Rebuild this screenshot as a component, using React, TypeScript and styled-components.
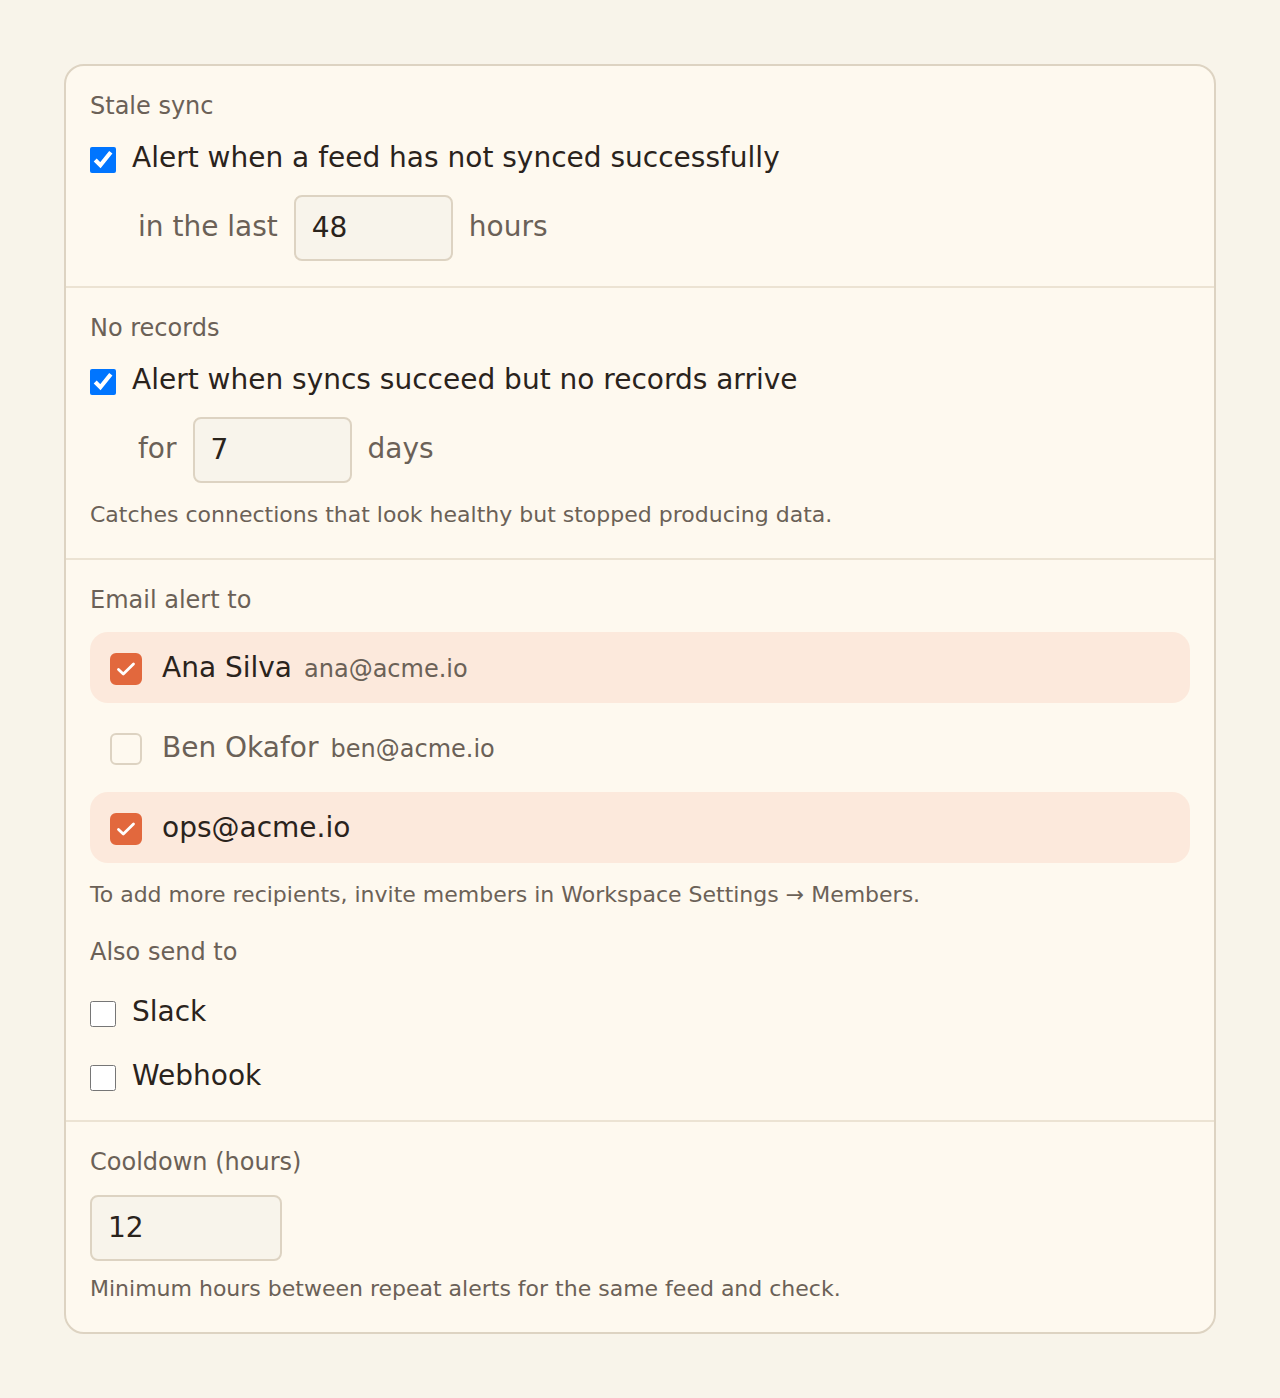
import * as React from 'react'
import styled, { createGlobalStyle, css } from 'styled-components'

const $ink = '#2a231c'
const $muted = '#6b6157'
const $line = '#ddd3c2'
const $divider = '#ece3d3'
const $accent = '#e2683d'

const GlobalStyle = createGlobalStyle`
  body {
    margin: 0;
    background: #f8f4ea;
    font-family: "DejaVu Sans", "Noto Sans", sans-serif;
    color: ${$ink};
  }
`

const Page = styled.div`
  padding: 64px;
`

const Card = styled.div`
  background: #fef9ef;
  border: 2px solid ${$line};
  border-radius: 20px;
  overflow: hidden;
`

const Section = styled.section<{ $bottom?: number }>`
  padding: 26px 24px ${props => props.$bottom ?? 24}px;
  & + & {
    border-top: 2px solid ${$divider};
  }
`

const Label = styled.div<{ $top?: number }>`
  font-size: 24px;
  line-height: 28px;
  color: ${$muted};
  margin-top: ${props => props.$top ?? 0}px;
`

const CheckRow = styled.label<{ $top?: number }>`
  display: flex;
  align-items: center;
  gap: 16px;
  font-size: 28px;
  line-height: 36px;
  margin-top: ${props => props.$top ?? 20}px;
  cursor: pointer;
`

const NativeBox = styled.input.attrs({ type: 'checkbox' })`
  width: 26px;
  height: 26px;
  margin: 4px 0 0 0;
  flex: none;
`

const InputRow = styled.div`
  display: flex;
  align-items: center;
  gap: 16px;
  margin: 19px 0 0 48px;
  font-size: 28px;
  line-height: 32px;
  color: ${$muted};
`

const NumberBox = styled.input<{ $width: number }>`
  box-sizing: border-box;
  width: ${props => props.$width}px;
  height: 66px;
  padding: 0 16px 2px;
  border: 2px solid ${$line};
  border-radius: 8px;
  background: #f8f4eb;
  font-family: inherit;
  font-size: 28px;
  color: ${$ink};
  outline: none;
`

const Unit = styled.span`
  padding-bottom: 3px;
`

const Field = styled(NumberBox)`
  display: block;
  margin-top: 19px;
`

const Help = styled.p<{ $top: number }>`
  margin: ${props => props.$top}px 0 0;
  padding-bottom: 5px;
  font-size: 22px;
  line-height: 28px;
  color: ${$muted};
`

const Recipients = styled.div`
  display: flex;
  flex-direction: column;
  gap: 9px;
  margin-top: 18px;
`

const Recipient = styled.label<{ $on: boolean }>`
  display: flex;
  align-items: center;
  gap: 20px;
  height: 71px;
  padding: 0 20px;
  border-radius: 18px;
  cursor: pointer;
  ${props => props.$on && css`
    background: #fce9dc;
  `}
`

const Tick = styled.span<{ $on: boolean }>`
  box-sizing: border-box;
  flex: none;
  width: 32px;
  height: 32px;
  margin-top: 2px;
  border-radius: 6px;
  display: grid;
  place-items: center;
  border: 2px solid ${props => (props.$on ? $accent : $line)};
  background: ${props => (props.$on ? $accent : 'transparent')};
`

const Name = styled.span<{ $on: boolean }>`
  font-size: 28px;
  color: ${props => (props.$on ? $ink : $muted)};
`

const Email = styled.span`
  font-size: 24px;
  color: ${$muted};
  margin-left: 12px;
`

const Options = styled.div`
  display: flex;
  flex-direction: column;
  gap: 28px;
  margin-top: 28px;
  & > ${CheckRow} {
    margin-top: 0;
  }
`

type Person = { name: string, email?: string, on: boolean }

const people: Person[] = [
  { name: 'Ana Silva', email: 'ana@acme.io', on: true },
  { name: 'Ben Okafor', email: 'ben@acme.io', on: false },
  { name: 'ops@acme.io', on: true },
]

function Check({ on }: { on: boolean }) {
  return (
    <Tick $on={on}>
      {on && (
        <svg width="22" height="22" viewBox="0 0 22 22" fill="none">
          <path d="M3.5 11.5l4.8 4.5L18.5 6" stroke="#fff" strokeWidth="2.8" strokeLinecap="round" strokeLinejoin="round" />
        </svg>
      )}
    </Tick>
  )
}

export default function App() {
  return (
    <>
      <GlobalStyle />
      <Page>
        <Card>
          <Section $bottom={25}>
            <Label>Stale sync</Label>
            <CheckRow>
              <NativeBox defaultChecked />
              Alert when a feed has not synced successfully
            </CheckRow>
            <InputRow>
              <Unit>in the last</Unit>
              <NumberBox $width={159} defaultValue="48" />
              <Unit>hours</Unit>
            </InputRow>
          </Section>

          <Section>
            <Label>No records</Label>
            <CheckRow>
              <NativeBox defaultChecked />
              Alert when syncs succeed but no records arrive
            </CheckRow>
            <InputRow>
              <Unit>for</Unit>
              <NumberBox $width={159} defaultValue="7" />
              <Unit>days</Unit>
            </InputRow>
            <Help $top={18}>Catches connections that look healthy but stopped producing data.</Help>
          </Section>

          <Section $bottom={26}>
            <Label>Email alert to</Label>
            <Recipients>
              {people.map(p => (
                <Recipient key={p.name} $on={p.on}>
                  <Check on={p.on} />
                  <span>
                    <Name $on={p.on}>{p.name}</Name>
                    {p.email && <Email>{p.email}</Email>}
                  </span>
                </Recipient>
              ))}
            </Recipients>
            <Help $top={18}>To add more recipients, invite members in Workspace Settings → Members.</Help>
            <Label $top={24}>Also send to</Label>
            <Options>
              <CheckRow>
                <NativeBox />
                Slack
              </CheckRow>
              <CheckRow>
                <NativeBox />
                Webhook
              </CheckRow>
            </Options>
          </Section>

          <Section>
            <Label>Cooldown (hours)</Label>
            <Field $width={192} defaultValue="12" />
            <Help $top={14}>Minimum hours between repeat alerts for the same feed and check.</Help>
          </Section>
        </Card>
      </Page>
    </>
  )
}
